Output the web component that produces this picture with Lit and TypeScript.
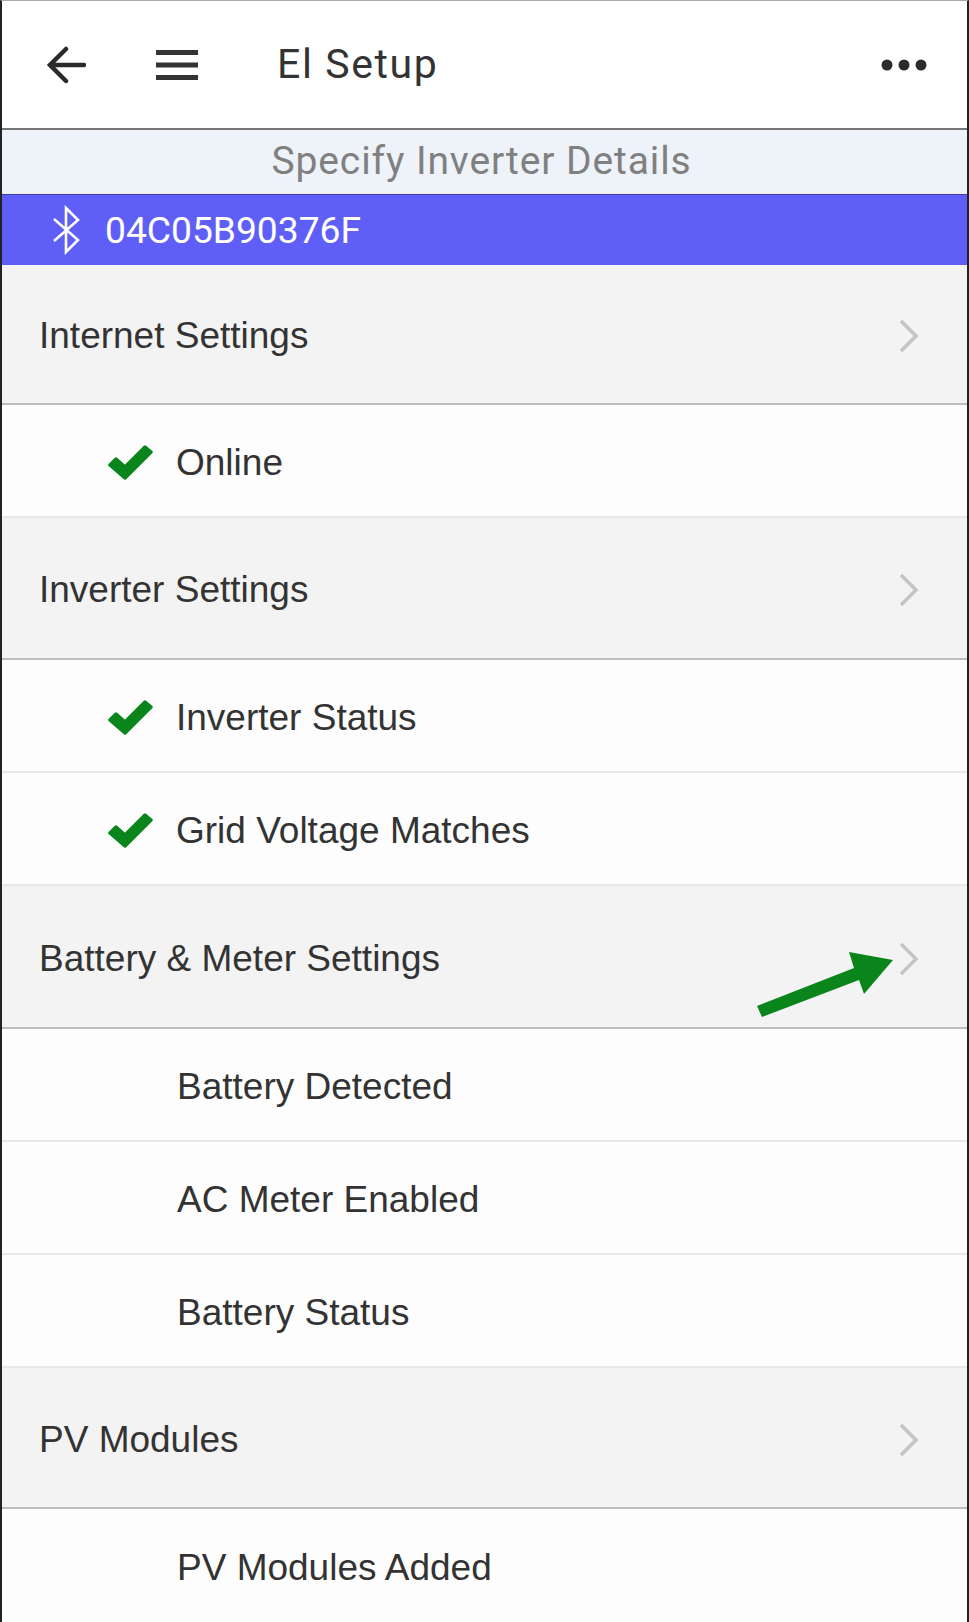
import { css, html, LitElement, svg } from 'lit';
import { customElement } from 'lit/decorators.js';

type Row = { label: string; head?: boolean; ok?: boolean; h: number };

const rows: Row[] = [
  { label: 'Internet Settings', head: true, h: 140 },
  { label: 'Online', ok: true, h: 113 },
  { label: 'Inverter Settings', head: true, h: 142 },
  { label: 'Inverter Status', ok: true, h: 113 },
  { label: 'Grid Voltage Matches', ok: true, h: 113 },
  { label: 'Battery & Meter Settings', head: true, h: 143 },
  { label: 'Battery Detected', h: 113 },
  { label: 'AC Meter Enabled', h: 113 },
  { label: 'Battery Status', h: 113 },
  { label: 'PV Modules', head: true, h: 141 },
  { label: 'PV Modules Added', h: 116 },
];

const check = svg`<path d="M2 21 8 15 17 23 37 3 43 8 17 34Z" fill="#0a851c" stroke="#0a851c" stroke-width="3.5" stroke-linejoin="round"/>`;

@customElement('app-root')
export class AppRoot extends LitElement {
  static styles = css`
    :host {
      display: block;
      position: relative;
      width: 969px;
      height: 1622px;
      overflow: hidden;
      background: #fdfdfd;
      font-family: Roboto, 'Liberation Sans', sans-serif;
      color: #2b2b2b;
    }
    .frame {
      box-sizing: border-box;
      height: 1622px;
      border-left: 2px solid #222;
      border-right: 2px solid #222;
      border-top: 1px solid #aaa;
      overflow: hidden;
    }
    .topbar {
      height: 127px;
      display: flex;
      align-items: center;
      background: #fff;
      border-bottom: 2px solid #777;
    }
    .topbar svg {
      display: block;
      flex: none;
    }
    .back {
      margin-left: 44px;
    }
    .menu {
      margin-left: 70px;
    }
    .title {
      margin-left: 79px;
      font-size: 41px;
      line-height: 46px;
      letter-spacing: 1.6px;
      color: #333;
      flex: 1;
      padding-bottom: 2px;
    }
    .more {
      margin-right: 40px;
    }
    .sub {
      height: 64px;
      line-height: 62px;
      background: #eef2f9;
      text-align: center;
      font-size: 39px;
      letter-spacing: 0.9px;
      color: #808080;
      padding-right: 6px;
    }
    .device {
      height: 71px;
      display: flex;
      align-items: center;
      background: #5f5ff7;
      border-top: 1px solid #3d3db0;
      box-sizing: border-box;
      color: #fff;
      font-size: 37.2px;
    }
    .device svg {
      margin-left: 50px;
      margin-right: 25px;
    }
    .row {
      box-sizing: border-box;
      display: flex;
      align-items: center;
      padding-top: 4px;
      font-family: 'Liberation Sans', Arial, sans-serif;
      font-size: 37px;
      color: #333;
      background: #fdfdfd;
      border-bottom: 2px solid #e8e8e8;
    }
    .row.head {
      background: #f3f3f3;
      padding-left: 37px;
      border-bottom: 2px solid #bdbdbd;
    }
    .row.child {
      padding-left: 175px;
    }
    .row.ok {
      padding-left: 106px;
    }
    .row.ok svg {
      margin-right: 22px;
    }
    .label {
      flex: 1;
    }
    .chev {
      margin-right: 48px;
    }
    .arrow {
      position: absolute;
      left: 750px;
      top: 945px;
    }
  `;

  render() {
    return html`
      <div class="frame">
        <div class="topbar">
          <svg class="back" width="40" height="38" viewBox="0 0 40 38" fill="none" stroke="#2b2b2b" stroke-width="4.5" stroke-linecap="round">
            <path d="M4 19H38M20 3 4 19 20 35" />
          </svg>
          <svg class="menu" width="42" height="30" viewBox="0 0 42 30" fill="#333">
            <rect y="0" width="42" height="5" />
            <rect y="12.5" width="42" height="5" />
            <rect y="25" width="42" height="5" />
          </svg>
          <div class="title">El Setup</div>
          <svg class="more" width="46" height="12" viewBox="0 0 46 12" fill="#2b2b2b">
            <circle cx="6" cy="6" r="5.5" />
            <circle cx="23" cy="6" r="5.5" />
            <circle cx="40" cy="6" r="5.5" />
          </svg>
        </div>
        <div class="sub">Specify Inverter Details</div>
        <div class="device">
          <svg width="28" height="50" viewBox="0 0 28 50" fill="none" stroke="#fff" stroke-width="2.6">
            <path d="M2 14 26 35 14 47V3L26 15 2 36" />
          </svg>
          <span>04C05B90376F</span>
        </div>
        ${rows.map((r) => this.renderRow(r))}
      </div>
      <svg class="arrow" width="146" height="74" viewBox="0 0 146 74">
        <path d="M7 61 104 23 99 7 143 15 114 49 109 35 12 72Z" fill="#0a851c" />
      </svg>
    `;
  }

  renderRow(r: Row) {
    const cls = r.head ? 'row head' : r.ok ? 'row ok' : 'row child';
    return html`
      <div class=${cls} style="height:${r.h}px">
        ${r.ok ? html`<svg width="46" height="38" viewBox="0 0 46 38">${check}</svg>` : ''}
        <span class="label">${r.label}</span>
        ${r.head
          ? html`<svg class="chev" width="20" height="34" viewBox="0 0 20 34" fill="none" stroke="#c4c4c4" stroke-width="3.5">
              <path d="M2 2 17 17 2 32" />
            </svg>`
          : ''}
      </div>
    `;
  }
}
